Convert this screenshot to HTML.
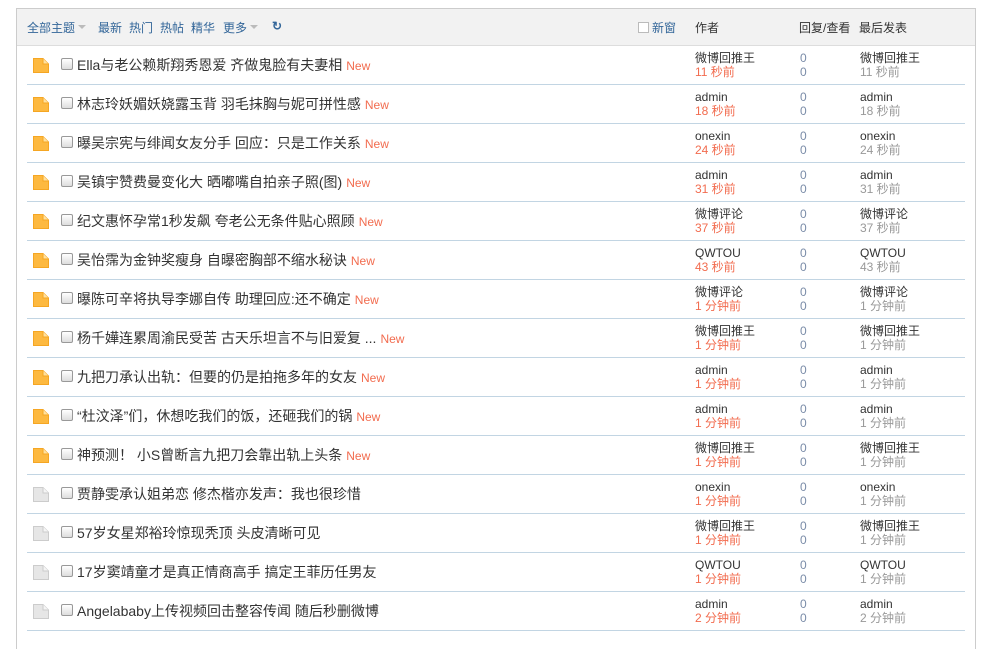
<!DOCTYPE html>
<html><head><meta charset="utf-8"><style>
body{margin:0;background:#fff;font-family:"Liberation Sans","Noto Sans CJK SC",sans-serif;}
.box{position:absolute;left:16px;top:8px;width:958px;height:640px;border:1px solid #ccc;border-bottom:none;}
.hd{position:absolute;left:0;top:0;width:958px;height:36px;background:#f2f2f2;border-bottom:1px solid #ddd;font-size:12px;color:#336699;}
.hd span{position:absolute;top:10px;}
.tri{display:inline-block;border:4px solid transparent;border-top:4px solid #bbb;margin-left:3px;vertical-align:-1px}
.row{position:absolute;left:10px;width:938px;height:38px;border-bottom:1px solid #c2d5e3;}
.ic{position:absolute;left:6px;top:12px;width:16px;height:15px;}
.cb{position:absolute;left:34px;top:12px;width:10px;height:10px;border:1px solid #999;border-radius:2px;background:linear-gradient(#fff,#ddd);}
.t{position:absolute;left:50px;top:9px;font-size:14px;color:#333;white-space:nowrap;}
.t i{font-style:normal;color:#f26c4f;font-size:12px;margin-left:4px}
.c{position:absolute;font-size:12px;line-height:13.5px;top:6px;}
.a{left:668px;color:#333}.a b,.l b{display:block;font-weight:normal}
.a b{color:#f26c4f}.n{left:773px;color:#7a8ca8}.l{left:833px;color:#333}.l b{color:#999}
</style></head><body><div class="box">
<div class="hd"><span style="left:10px">全部主题<i class="tri"></i></span><span style="left:81px">最新</span><span style="left:112px">热门</span><span style="left:143px">热帖</span><span style="left:174px">精华</span><span style="left:206px">更多<i class="tri"></i></span><span style="left:255px;font-weight:bold">↻</span>
<span style="left:621px"><i style="display:inline-block;width:9px;height:9px;border:1px solid #bbb;background:#fff;vertical-align:-1px;margin-right:3px"></i>新窗</span>
<span style="left:678px;color:#333">作者</span><span style="left:782px;color:#333">回复/查看</span><span style="left:842px;color:#333">最后发表</span></div>
<div id="rows"></div></div>
<script>
var d=[["Ella与老公赖斯翔秀恩爱 齐做鬼脸有夫妻相",1,"微博回推王","11 秒前"],["林志玲妖媚妖娆露玉背 羽毛抹胸与妮可拼性感",1,"admin","18 秒前"],["曝吴宗宪与绯闻女友分手 回应：只是工作关系",1,"onexin","24 秒前"],["吴镇宇赞费曼变化大 晒嘟嘴自拍亲子照(图)",1,"admin","31 秒前"],["纪文惠怀孕常1秒发飙 夸老公无条件贴心照顾",1,"微博评论","37 秒前"],["吴怡霈为金钟奖瘦身 自曝密胸部不缩水秘诀",1,"QWTOU","43 秒前"],["曝陈可辛将执导李娜自传 助理回应:还不确定",1,"微博评论","1 分钟前"],["杨千嬅连累周渝民受苦 古天乐坦言不与旧爱复 ...",1,"微博回推王","1 分钟前"],["九把刀承认出轨：但要的仍是拍拖多年的女友",1,"admin","1 分钟前"],["“杜汶泽”们，休想吃我们的饭，还砸我们的锅",1,"admin","1 分钟前"],["神预测！ 小S曾断言九把刀会靠出轨上头条",1,"微博回推王","1 分钟前"],["贾静雯承认姐弟恋 修杰楷亦发声：我也很珍惜",0,"onexin","1 分钟前"],["57岁女星郑裕玲惊现秃顶 头皮清晰可见",0,"微博回推王","1 分钟前"],["17岁窦靖童才是真正情商高手 搞定王菲历任男友",0,"QWTOU","1 分钟前"],["Angelababy上传视频回击整容传闻 随后秒删微博",0,"admin","2 分钟前"]];
var h="";d.forEach(function(r,i){var col=r[1]?"#fdb940":"#e6e6e6",st=r[1]?"#f5a623":"#ccc";
h+='<div class="row" style="top:'+(37+i*39)+'px"><svg class="ic" viewBox="0 0 16 15"><path d="M0.5 0.5H10L15.5 6V14.5H0.5Z" fill="'+col+'" stroke="'+st+'"/><path d="M10 0.5V6H15.5" fill="'+(r[1]?"#ffe1a0":"#f5f5f5")+'" stroke="'+st+'"/></svg><div class="cb"></div><div class="t">'+r[0]+(r[1]?'<i>New</i>':'')+'</div><div class="c a">'+r[2]+'<b>'+r[3]+'</b></div><div class="c n">0<br>0</div><div class="c l">'+r[2]+'<b>'+r[3]+'</b></div></div>';});
document.getElementById("rows").innerHTML=h;
</script></body></html>
